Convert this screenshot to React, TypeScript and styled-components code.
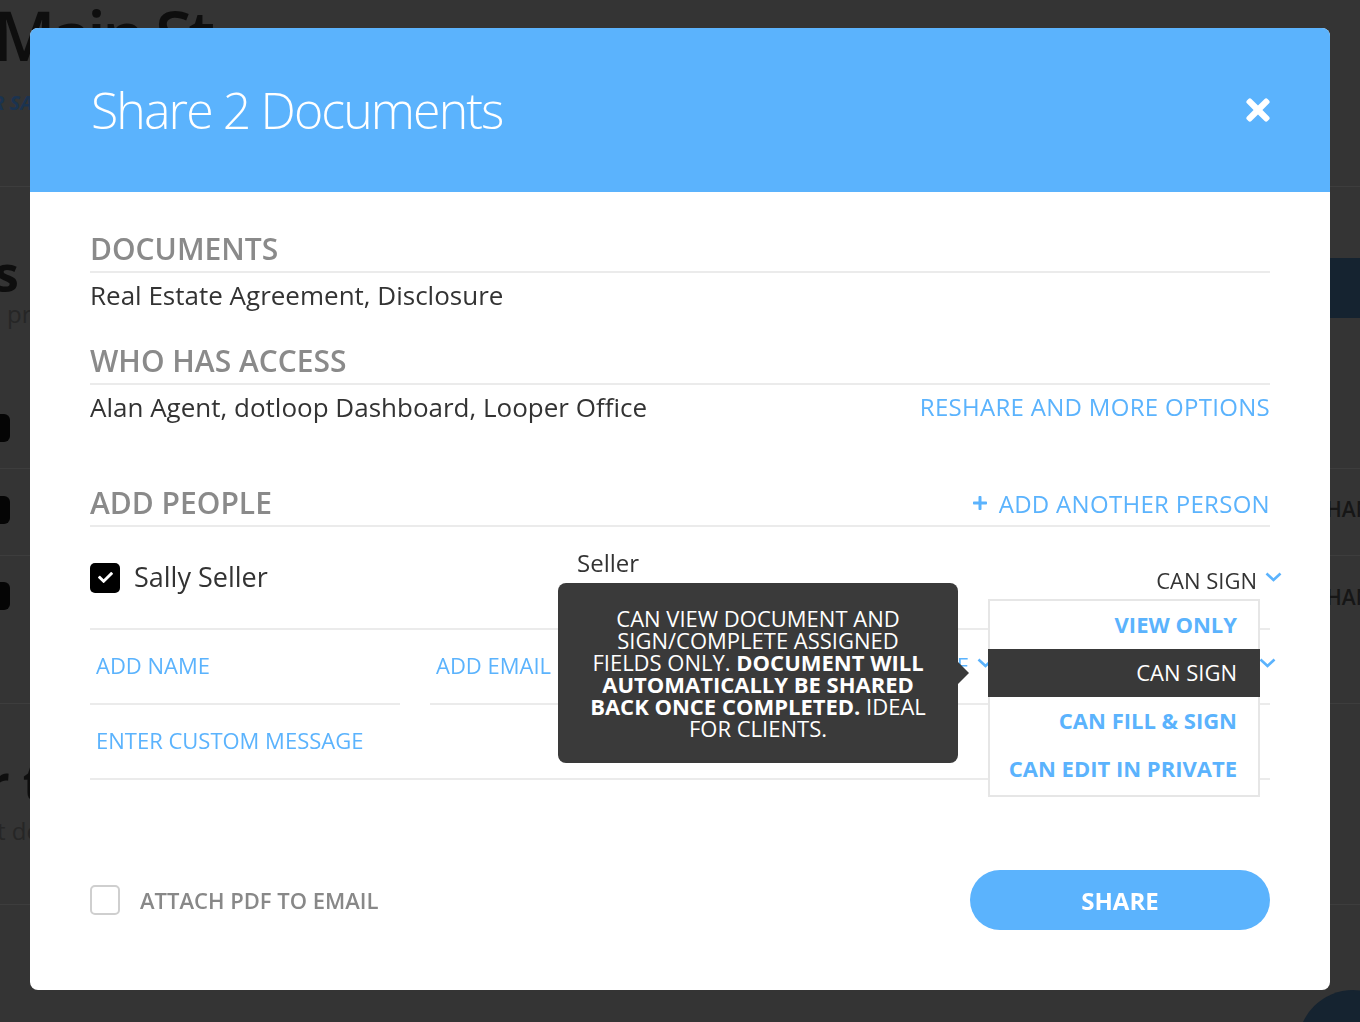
import React from 'react';
import styled, { createGlobalStyle } from 'styled-components';
import { FaTimes, FaPlus, FaCheck } from 'react-icons/fa';

const BLUE = '#5bb3fd';

const GlobalStyle = createGlobalStyle`
  * { box-sizing: border-box; }
  html, body { margin: 0; padding: 0; }
  body {
    background: #343434;
    font-family: 'Open Sans', 'Noto Sans', sans-serif;
    overflow: hidden;
  }
`;

// ---- page behind the overlay (already dimmed) ----
const Backdrop = styled.div`
  position: relative;
  width: 1360px;
  height: 1022px;
  overflow: hidden;
  display: flex;
  flex-direction: column;
`;

const BackHeader = styled.div`
  height: 187px;
  flex-shrink: 0;
  border-bottom: 1px solid #3d3d3d;
`;

const BackTitle = styled.div`
  margin: -5px 0 0 -7px;
  font-size: 68px;
  font-weight: 600;
  line-height: 80px;
  color: #0e0e0e;
  letter-spacing: -4px;
`;

const BackTag = styled.div`
  margin: 14px 0 0 -33px;
  font-size: 20px;
  font-weight: 700;
  font-style: italic;
  color: #1b3350;
`;

const BackRow = styled.div<{ h: number; line?: boolean }>`
  height: ${({ h }) => h}px;
  flex-shrink: 0;
  display: flex;
  justify-content: space-between;
  border-bottom: ${({ line }) => (line ? '1px solid #3d3d3d' : 'none')};
`;

const BackLeft = styled.div<{ pt: number }>`
  padding-top: ${({ pt }) => pt}px;
`;

const BackRight = styled.div<{ pt: number }>`
  padding-top: ${({ pt }) => pt}px;
  width: 30px;
  overflow: hidden;
`;

const BackHeading = styled.div<{ ml?: number }>`
  margin-left: ${({ ml = 0 }) => ml}px;
  font-size: 50px;
  font-weight: 700;
  line-height: 52px;
  color: #0e0e0e;
  white-space: pre;
`;

const BackSub = styled.div<{ ml?: number; mt?: number }>`
  margin: ${({ mt = 0 }) => mt}px 0 0 ${({ ml = 0 }) => ml}px;
  font-size: 24px;
  line-height: 30px;
  color: #262626;
  white-space: pre;
`;

const BackBox = styled.div`
  width: 32px;
  height: 28px;
  margin-left: -22px;
  border-radius: 6px;
  background: #050505;
`;

const NavyBlock = styled.div`
  width: 30px;
  height: 60px;
  background: #152330;
`;

const BackCaps = styled.div`
  font-size: 21px;
  font-weight: 600;
  color: #161616;
  white-space: nowrap;
  margin-left: -4px;
`;

const NavyDot = styled.div`
  position: absolute;
  left: 1298px;
  top: 990px;
  width: 110px;
  height: 110px;
  border-radius: 50%;
  background: #152330;
`;

// ---- modal ----
const Modal = styled.div`
  position: fixed;
  left: 30px;
  top: 28px;
  width: 1300px;
  height: 962px;
  background: #fff;
  border-radius: 8px;
  display: flex;
  flex-direction: column;
`;

const Header = styled.div`
  height: 164px;
  padding: 0 60px 0 61px;
  background: ${BLUE};
  border-radius: 8px 8px 0 0;
  display: flex;
  align-items: center;
  justify-content: space-between;
`;

const Title = styled.h1`
  margin: 0;
  font-size: 50px;
  font-weight: 300;
  line-height: 1;
  color: #fff;
  letter-spacing: -1.9px;
`;

const CloseButton = styled.button`
  border: none;
  background: none;
  padding: 0;
  margin-right: -5px;
  color: #fff;
  display: flex;
  cursor: pointer;
`;

const Body = styled.div`
  padding: 0 60px;
  display: flex;
  flex-direction: column;
`;

const SectionHead = styled.div<{ mt: number }>`
  margin-top: ${({ mt }) => mt}px;
  padding-bottom: 4px;
  border-bottom: 2px solid #ebebeb;
  display: flex;
  align-items: center;
  justify-content: space-between;
`;

const Label = styled.div`
  font-size: 30px;
  font-weight: 600;
  line-height: 36px;
  color: #8a8a8a;
  text-transform: uppercase;
`;

const SectionText = styled.div`
  margin-top: 6px;
  font-size: 26px;
  line-height: 32px;
  color: #333;
  display: flex;
  align-items: center;
  justify-content: space-between;
`;

const LinkButton = styled.a`
  font-size: 24px;
  letter-spacing: 0.3px;
  color: ${BLUE};
  text-transform: uppercase;
  display: flex;
  align-items: center;
  gap: 11px;
  cursor: pointer;
`;

const PersonRow = styled.div`
  height: 103px;
  border-bottom: 2px solid #ebebeb;
  display: grid;
  grid-template-columns: 487px 1fr auto;
  align-items: center;
`;

const NameCell = styled.div`
  display: flex;
  align-items: center;
  gap: 14px;
`;

const CheckBox = styled.span<{ checked?: boolean }>`
  width: 30px;
  height: 30px;
  border-radius: 5px;
  display: flex;
  align-items: center;
  justify-content: center;
  background: ${({ checked }) => (checked ? '#000' : '#fff')};
  border: ${({ checked }) => (checked ? 'none' : '2px solid #cfcfcf')};
  color: #fff;
`;

const PersonName = styled.span`
  font-size: 27px;
  font-weight: 500;
  color: #333;
  margin-top: -3px;
`;

const RoleText = styled.div`
  align-self: start;
  margin-top: 20px;
  font-size: 24px;
  line-height: 31px;
  color: #333;
`;

const PermissionCell = styled.div`
  position: relative;
  margin-top: 4px;
  justify-self: end;
`;

const Trigger = styled.div<{ muted?: boolean }>`
  display: flex;
  align-items: center;
  gap: 8px;
  margin-right: -12px;
  font-size: 22px;
  line-height: 30px;
  color: ${({ muted }) => (muted ? BLUE : '#333')};
  text-transform: uppercase;
`;

const Menu = styled.div`
  position: absolute;
  top: calc(100% + 4px);
  right: 10px;
  width: 272px;
  background: #fff;
  border: 2px solid #e6e6e6;
  padding-bottom: 2px;
  z-index: 2;
`;

const MenuItem = styled.div<{ active?: boolean }>`
  height: 48px;
  margin: 0 -2px;
  padding: 0 23px 2px 0;
  display: flex;
  align-items: center;
  justify-content: flex-end;
  font-size: 22px;
  font-weight: ${({ active }) => (active ? 400 : 700)};
  color: ${({ active }) => (active ? '#fff' : BLUE)};
  background: ${({ active }) => (active ? '#393939' : 'transparent')};
  text-transform: uppercase;
`;

const Tooltip = styled.div`
  position: absolute;
  right: calc(100% + 32px);
  top: -18px;
  width: 400px;
  height: 180px;
  border-radius: 8px;
  background: #3a3a3a;
  color: #fff;
  font-size: 22px;
  line-height: 22px;
  text-align: center;
  text-transform: uppercase;
  display: flex;
  flex-direction: column;
  justify-content: center;
  align-items: center;

  &::after {
    content: '';
    position: absolute;
    left: 100%;
    top: 50%;
    margin-top: -11px;
    border-style: solid;
    border-width: 11px 0 11px 11px;
    border-color: transparent transparent transparent #3a3a3a;
  }

  b {
    font-weight: 700;
  }
`;

const FieldsRow = styled.div`
  display: grid;
  grid-template-columns: 310px 310px 230px 1fr;
  column-gap: 30px;
`;

const Field = styled.div<{ end?: boolean }>`
  height: 75px;
  padding: 0 6px 4px;
  border-bottom: 2px solid #ebebeb;
  display: flex;
  align-items: center;
  justify-content: ${({ end }) => (end ? 'flex-end' : 'flex-start')};
  gap: 8px;
  font-size: 22px;
  color: ${BLUE};
  text-transform: uppercase;
`;

const Footer = styled.div`
  margin-top: 90px;
  height: 60px;
  display: flex;
  align-items: center;
  justify-content: space-between;
`;

const AttachLabel = styled.label`
  display: flex;
  align-items: center;
  gap: 20px;
  font-size: 22px;
  font-weight: 600;
  color: #888;
  text-transform: uppercase;
`;

const ShareButton = styled.button`
  width: 300px;
  height: 60px;
  border: none;
  border-radius: 30px;
  background: ${BLUE};
  color: #fff;
  font-family: inherit;
  font-size: 24px;
  font-weight: 700;
  text-transform: uppercase;
  cursor: pointer;
`;

const Chevron = ({ mt = 0 }: { mt?: number }) => (
  <svg width="17" height="10" viewBox="0 0 17 10" style={{ marginTop: mt }}>
    <polyline points="1.5,1.5 8.5,8 15.5,1.5" fill="none" stroke={BLUE} strokeWidth="2.6" />
  </svg>
);

const permissions = ['View only', 'Can sign', 'Can fill & sign', 'Can edit in private'];

export default function App() {
  return (
    <>
      <GlobalStyle />
      <Backdrop>
        <BackHeader>
          <BackTitle>Main St</BackTitle>
          <BackTag>FOR SALE</BackTag>
        </BackHeader>
        <BackRow h={199}>
          <BackLeft pt={60}>
            <BackHeading ml={-6}>s</BackHeading>
            <BackSub ml={7}>pr</BackSub>
          </BackLeft>
          <BackRight pt={71}>
            <NavyBlock />
          </BackRight>
        </BackRow>
        <BackRow h={83} line>
          <BackLeft pt={28}>
            <BackBox />
          </BackLeft>
        </BackRow>
        <BackRow h={87} line>
          <BackLeft pt={27}>
            <BackBox />
          </BackLeft>
          <BackRight pt={26}>
            <BackCaps>HAN</BackCaps>
          </BackRight>
        </BackRow>
        <BackRow h={148} line>
          <BackLeft pt={26}>
            <BackBox />
          </BackLeft>
          <BackRight pt={27}>
            <BackCaps>HAN</BackCaps>
          </BackRight>
        </BackRow>
        <BackRow h={201} line>
          <BackLeft pt={52}>
            <BackHeading ml={-13}>r t</BackHeading>
            <BackSub ml={-3} mt={8}>
              t de
            </BackSub>
          </BackLeft>
        </BackRow>
        <NavyDot />
      </Backdrop>

      <Modal>
        <Header>
          <Title>Share 2 Documents</Title>
          <CloseButton aria-label="Close">
            <FaTimes size={34} />
          </CloseButton>
        </Header>
        <Body>
          <SectionHead mt={39}>
            <Label>Documents</Label>
          </SectionHead>
          <SectionText>Real Estate Agreement, Disclosure</SectionText>

          <SectionHead mt={32}>
            <Label>Who has access</Label>
          </SectionHead>
          <SectionText>
            <span>Alan Agent, dotloop Dashboard, Looper Office</span>
            <LinkButton>Reshare and more options</LinkButton>
          </SectionText>

          <SectionHead mt={62}>
            <Label>Add people</Label>
            <LinkButton>
              <FaPlus size={16} />
              Add another person
            </LinkButton>
          </SectionHead>

          <PersonRow>
            <NameCell>
              <CheckBox checked>
                <FaCheck size={15} />
              </CheckBox>
              <PersonName>Sally Seller</PersonName>
            </NameCell>
            <RoleText>Seller</RoleText>
            <PermissionCell>
              <Trigger>
                Can sign
                <Chevron mt={-6} />
              </Trigger>
              <Menu>
                {permissions.map((p) => (
                  <MenuItem key={p} active={p === 'Can sign'}>
                    {p}
                  </MenuItem>
                ))}
                <Tooltip>
                  <span>Can view document and</span>
                  <span>sign/complete assigned</span>
                  <span>
                    fields only. <b>Document will</b>
                  </span>
                  <span>
                    <b>automatically be shared</b>
                  </span>
                  <span>
                    <b>back once completed.</b> Ideal
                  </span>
                  <span>for clients.</span>
                </Tooltip>
              </Menu>
            </PermissionCell>
          </PersonRow>

          <FieldsRow>
            <Field>Add name</Field>
            <Field>Add email</Field>
            <Field end>
              Select role
              <Chevron mt={-4} />
            </Field>
            <Field end>
              <Trigger muted>
                Can sign
                <Chevron mt={-4} />
              </Trigger>
            </Field>
          </FieldsRow>
          <Field>Enter custom message</Field>

          <Footer>
            <AttachLabel>
              <CheckBox />
              Attach PDF to email
            </AttachLabel>
            <ShareButton>Share</ShareButton>
          </Footer>
        </Body>
      </Modal>
    </>
  );
}
